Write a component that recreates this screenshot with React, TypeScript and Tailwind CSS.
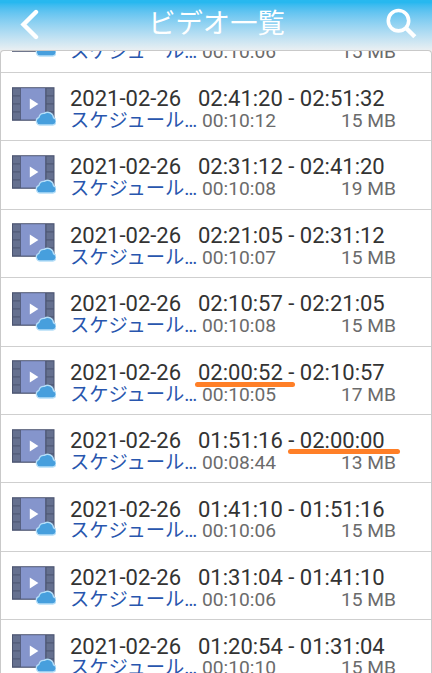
type Video = {
  start?: string
  end?: string
  duration: string
  size: string
  mark?: 'start' | 'end'
}

const videos: Video[] = [
  // scrolled under the header, only its lower line shows
  { duration: '00:10:06', size: '15 MB' },
  { start: '02:41:20', end: '02:51:32', duration: '00:10:12', size: '15 MB' },
  { start: '02:31:12', end: '02:41:20', duration: '00:10:08', size: '19 MB' },
  { start: '02:21:05', end: '02:31:12', duration: '00:10:07', size: '15 MB' },
  { start: '02:10:57', end: '02:21:05', duration: '00:10:08', size: '15 MB' },
  { start: '02:00:52', end: '02:10:57', duration: '00:10:05', size: '17 MB', mark: 'start' },
  { start: '01:51:16', end: '02:00:00', duration: '00:08:44', size: '13 MB', mark: 'end' },
  { start: '01:41:10', end: '01:51:16', duration: '00:10:06', size: '15 MB' },
  { start: '01:31:04', end: '01:41:10', duration: '00:10:06', size: '15 MB' },
  { start: '01:20:54', end: '01:31:04', duration: '00:10:10', size: '15 MB' },
]

export default function App() {
  return (
    <div className="flex h-[673px] w-[432px] flex-col overflow-hidden bg-[#eeeeee] font-['Roboto','Noto_Sans_CJK_JP',sans-serif]">
      <Header />
      <main className="min-h-0 flex-1 overflow-hidden rounded-t-[4px] border-x border-t border-[#c9c9c9] bg-white">
        <div className="-mt-[46.7px]">
          {videos.map((video, i) => (
            <VideoRow key={i} video={video} />
          ))}
        </div>
      </main>
    </div>
  )
}

function Header() {
  return (
    <header className="flex h-[50px] shrink-0 items-center justify-between bg-linear-to-b from-[#27b8ef] from-5% to-[#e9eff2] pr-[15px] pl-[19px] text-white">
      <svg className="-mt-[3px] h-[32px] w-[20px]" viewBox="0 0 20 32" fill="none" stroke="currentColor" strokeWidth="4.4">
        <path d="M17 4L4.5 16.5L17 29" strokeLinecap="round" strokeLinejoin="miter" />
      </svg>
      <h1 className="-mt-[2px] pl-[9px] text-[27.3px] leading-[46px]">ビデオ一覧</h1>
      <svg className="-mt-[3px] h-[32px] w-[32px]" viewBox="0 0 32 32" fill="none" stroke="currentColor">
        <circle cx="13.5" cy="12.7" r="10.2" strokeWidth="3.6" />
        <path d="M21 20L29.8 28.8" strokeWidth="4.4" />
      </svg>
    </header>
  )
}

function VideoRow({ video }: { video: Video }) {
  return (
    <div className="flex h-[68.45px] border-b border-[#cfcfcf] pl-[10px]">
      <VideoIcon />
      <div className="ml-[14px] pt-[13.3px]">
        <div className="flex h-[26px] text-[22px] leading-[26px] text-[#333333]">
          {video.start && (
            <>
              <span className="w-[128px]">2021-02-26</span>
              <span className="relative whitespace-pre">
                {video.start} - {video.end}
                {video.mark === 'start' && (
                  <span className="absolute top-[22px] -left-[3px] h-[5px] w-[100px] rounded-full bg-[#ff7f27]" />
                )}
                {video.mark === 'end' && (
                  <span className="absolute top-[21px] left-[90px] h-[5px] w-[112px] rounded-full bg-[#ff7f27]" />
                )}
              </span>
            </>
          )}
        </div>
        <div className="-mt-[1.2px] flex h-[22px] w-[326px] text-[19.2px] leading-[20px] text-[#6b6b6b]">
          <span className="w-[132px] text-[19.3px] whitespace-nowrap text-[#2856ae]">スケジュール…</span>
          <span>{video.duration}</span>
          <span className="ml-auto">{video.size}</span>
        </div>
      </div>
    </div>
  )
}

function VideoIcon() {
  return (
    <svg className="mt-[12.8px] h-[42px] w-[45px] shrink-0" viewBox="0 0 45 42">
      <rect x="1" y="1.2" width="42.5" height="33.6" fill="#4b5470" />
      {/* film perforations */}
      <g fill="#65708f">
        {[2.4, 10.4, 18.4, 26.4].map((y) => (
          <g key={y}>
            <rect x="2" y={y} width="7" height="7" />
            <rect x="35.5" y={y} width="7" height="7" />
          </g>
        ))}
      </g>
      <rect x="9.8" y="2.2" width="24.4" height="31.4" fill="#8595cc" />
      <path d="M18.8 12.6v10.8l8.6-5.4z" fill="#fff" />
      <path
        d="M28.8 39a4 4 0 0 1-.9-7.7 5.2 5.2 0 0 1 5.4-3.9 5.8 5.8 0 0 1 9.2 4.4 3.7 3.7 0 0 1-.6 7.2z"
        fill="#479fdd"
        stroke="#b5def8"
        strokeWidth="1.3"
      />
    </svg>
  )
}
